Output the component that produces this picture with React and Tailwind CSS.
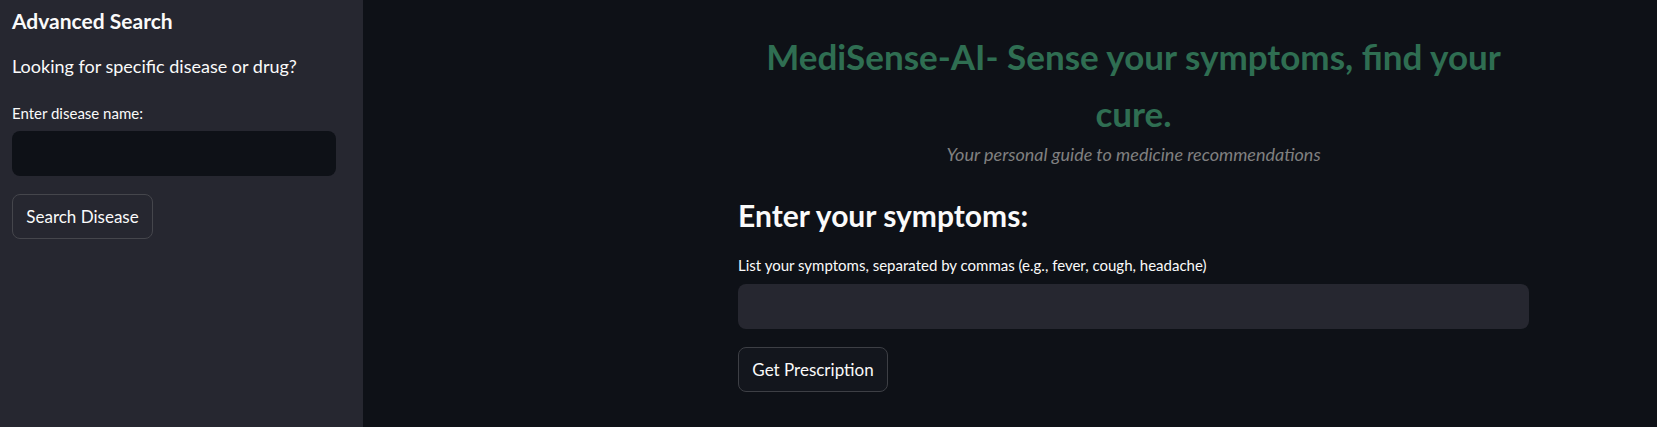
export default function App() {
  return (
    <div className="flex h-[427px] w-full overflow-hidden bg-[#0e1117] font-['Lato',sans-serif] text-[#fafafa]">
      {/* sidebar */}
      <aside className="w-[363px] shrink-0 bg-[#262730] px-3">
        <h2 className="mt-[6px] text-[21px] font-bold leading-[30px]">Advanced Search</h2>
        <p className="mt-[18px] text-[18px] leading-[24px]">Looking for specific disease or drug?</p>
        <label className="mt-[25px] block text-[15px] leading-[20px]">Enter disease name:</label>
        <input
          type="text"
          className="mt-[8px] block h-[45px] w-[324px] rounded-lg bg-[#0e1117] px-3 text-[16px] outline-none"
        />
        <button className="mt-[18px] h-[45px] w-[141px] rounded-lg border border-[#45464c] bg-[#262730] text-[17px]">
          Search Disease
        </button>
      </aside>

      {/* main */}
      <main className="flex-1">
        <div className="ml-[375px] w-[791px]">
          <h1 className="mx-auto mt-[28px] max-w-[760px] text-center text-[35px] font-bold leading-[57px] text-[#2f6e52]">
            MediSense-AI- Sense your symptoms, find your cure.
          </h1>
          <p className="text-center text-[18px] italic leading-[24px] text-[#808080]">
            Your personal guide to medicine recommendations
          </p>
          <h3 className="mt-[31px] text-[30px] font-bold leading-[36px]">Enter your symptoms:</h3>
          <label className="mt-[22px] block text-[15px] leading-[20px]">
            List your symptoms, separated by commas (e.g., fever, cough, headache)
          </label>
          <input
            type="text"
            className="mt-[9px] block h-[45px] w-full rounded-lg bg-[#262730] px-3 text-[16px] outline-none"
          />
          <button className="mt-[18px] h-[45px] w-[150px] rounded-lg border border-[#3d3f45] bg-[#13161d] text-[17px]">
            Get Prescription
          </button>
        </div>
      </main>
    </div>
  );
}
